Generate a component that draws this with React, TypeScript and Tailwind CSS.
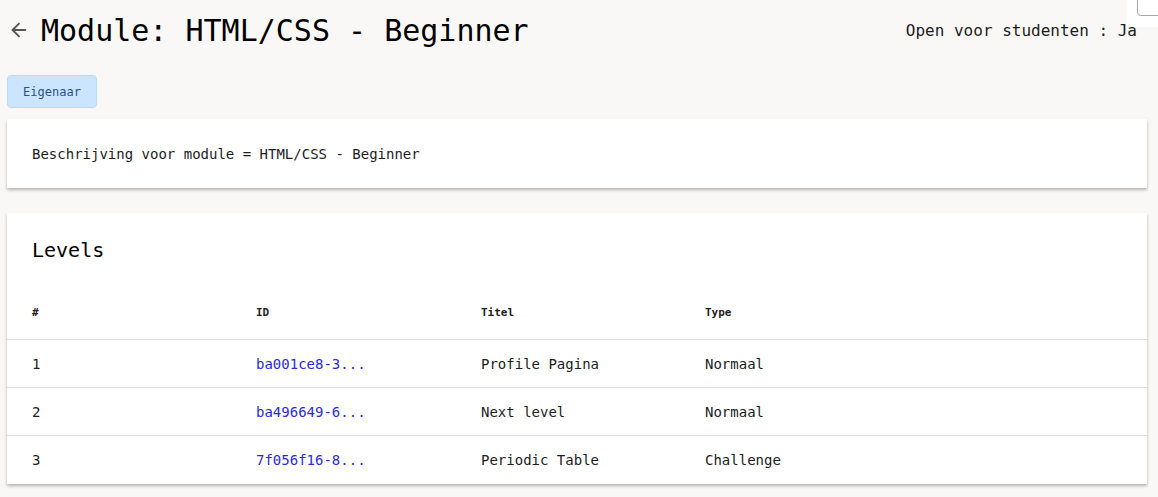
import React from "react";

const rows = [
  { n: "1", id: "ba001ce8-3...", title: "Profile Pagina", type: "Normaal" },
  { n: "2", id: "ba496649-6...", title: "Next level", type: "Normaal" },
  { n: "3", id: "7f056f16-8...", title: "Periodic Table", type: "Challenge" },
];

export default function App() {
  return (
    <div
      className="relative w-[1158px] h-[497px] overflow-hidden bg-[#f9f8f7] text-[#1c1c1c]"
      style={{ fontFamily: '"DejaVu Sans Mono", "Liberation Mono", monospace' }}
    >
      <div className="absolute top-0 right-0 w-[31px] h-[27px] bg-white overflow-hidden">
        <div className="absolute left-[10px] top-[-6px] w-[30px] h-[22px] border border-[#a8a8a8] rounded-[4px]" />
      </div>

      <div className="flex items-center justify-between h-[62px] pl-[8px] pr-[21px]">
        <div className="flex items-center">
          <svg width="22" height="22" viewBox="0 0 24 24" fill="none" stroke="#555" strokeWidth="2" strokeLinecap="round" strokeLinejoin="round" className="mt-[-2px]">
            <path d="M19 12H5" />
            <path d="M12 19l-7-7 7-7" />
          </svg>
          <h1 className="ml-[11px] text-[30px] leading-[36px] font-medium text-black">Module: HTML/CSS - Beginner</h1>
        </div>
        <div className="text-[16px] leading-[20px]">Open voor studenten : Ja</div>
      </div>

      <div className="px-[7px]">
        <div className="mt-[13px] inline-flex items-center justify-center w-[90px] h-[33px] rounded-[4px] bg-[#cce5ff] border border-[#b8daff] text-[12px] text-[#2c4f8a]">
          Eigenaar
        </div>

        <div className="mt-[11px] w-[1140px] h-[69px] bg-white flex items-center pt-[1px] px-[25px] text-[14px] shadow-[0_2px_3px_rgba(0,0,0,0.28)]">
          Beschrijving voor module = HTML/CSS - Beginner
        </div>

        <div className="mt-[25px] w-[1140px] bg-white shadow-[0_2px_3px_rgba(0,0,0,0.28)]">
          <div className="h-[70px] pt-[25px] pl-[25px] text-[20px] leading-[24px] font-medium text-black">Levels</div>
          <div className="grid grid-cols-[224px_225px_224px_1fr] pl-[25px] pt-[4px] h-[57px] items-center border-b border-[#e0e0e0] text-[11px] font-bold text-[#222]">
            <div>#</div>
            <div>ID</div>
            <div>Titel</div>
            <div>Type</div>
          </div>
          {rows.map((r, i) => (
            <div
              key={r.n}
              className={`grid grid-cols-[224px_225px_224px_1fr] pl-[25px] pt-[1px] h-[48px] items-center text-[14px] ${i < rows.length - 1 ? "border-b border-[#e0e0e0]" : ""}`}
            >
              <div>{r.n}</div>
              <div className="text-[#2a2ad8]">{r.id}</div>
              <div>{r.title}</div>
              <div>{r.type}</div>
            </div>
          ))}
        </div>
      </div>
    </div>
  );
}
